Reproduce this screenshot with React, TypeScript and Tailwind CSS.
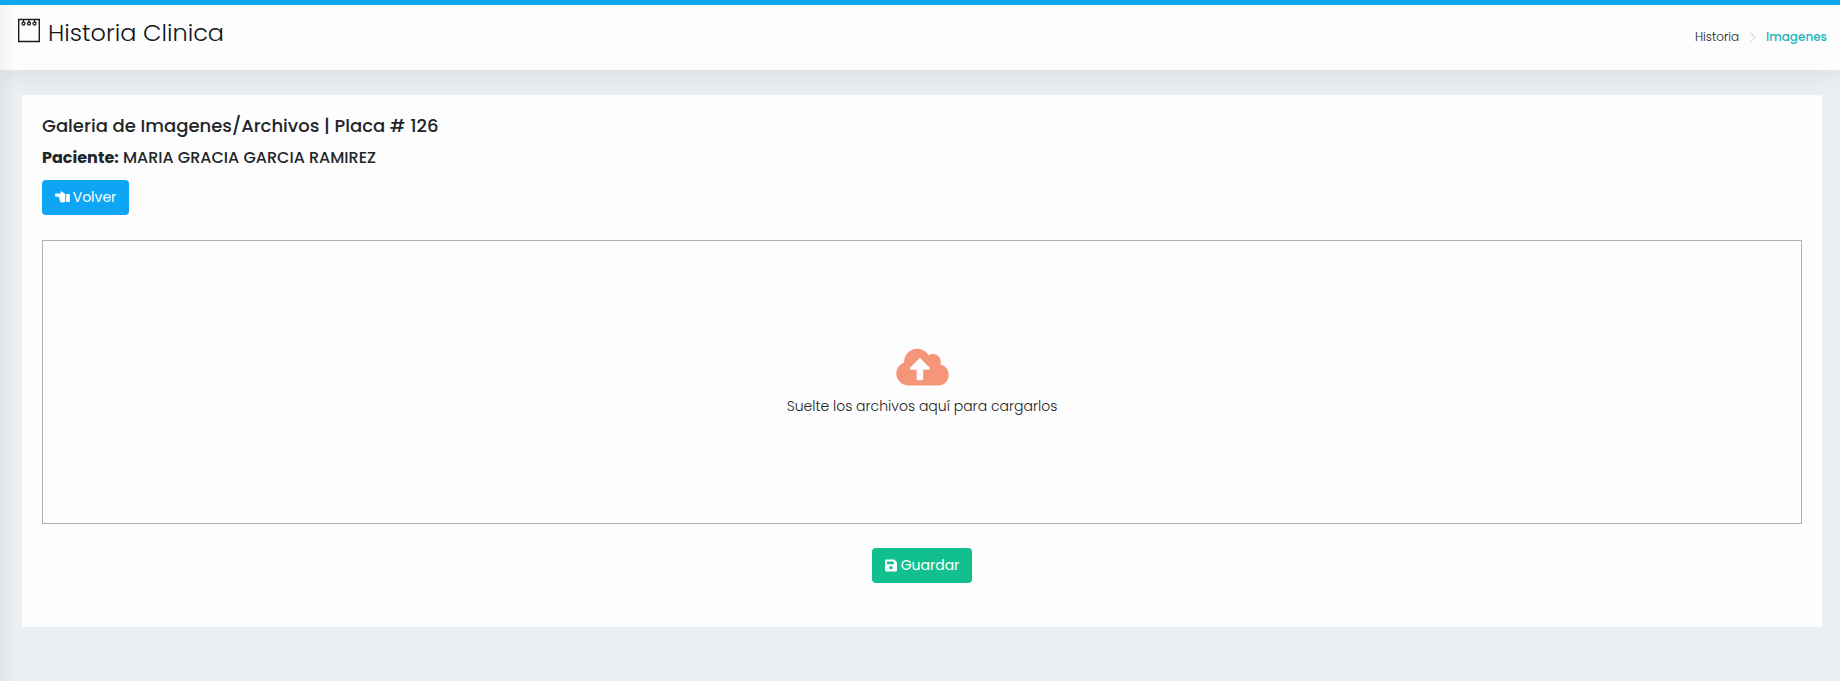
import React from 'react';
import { FaCloudUploadAlt } from 'react-icons/fa';

const NotepadIcon = () => (
  <svg className="mt-[18px] h-[25px] w-[22px] shrink-0" viewBox="0 0 22 25" fill="none" stroke="#1c1c1c">
    <path d="M.7 1.5h20.6v22H.7z" strokeWidth="1.4" />
    <path d="M5.5 1v3M11 1v3M16.5 1v3" />
    <circle cx="5.500" cy="5.500" r="1.500" strokeWidth="1.300" />
    <circle cx="11" cy="5.500" r="1.500" strokeWidth="1.300" />
    <circle cx="16.500" cy="5.500" r="1.500" strokeWidth="1.300" />
  </svg>
);

const HandIcon = () => (
  <svg className="-mt-[2px] h-[12px] w-[15px]" viewBox="0 0 15 12" fill="currentColor">
    <path d="M1 2.5h5.200L5.500 1.400C5.300.6 6.100.2 6.800.6L10.300 3v7.600c-.8.6-1.500.9-2.500.9H6.900c-1 0-1.700-.7-1.600-1.600-.8-.4-1-1.200-.7-1.900-.7-.6-.8-1.500-.3-2.200H1C.3 5.800 0 5 0 4.200S.3 2.500 1 2.500zM11.200 3h2.900c.4 0 .7.3.7.7v6.600c0 .4-.3.7-.7.7h-2.900z" />
  </svg>
);

const SaveIcon = () => (
  <svg className="-mt-px h-[13px] w-[12px]" viewBox="0 0 12 13" fill="currentColor" fillRule="evenodd">
    <path d="M1.200.5h8L12 3.300v8c0 .7-.5 1.200-1.200 1.200H1.200C.5 12.500 0 12 0 11.300V1.700C0 1 .5.500 1.200.500zM2 2.500v2.700h6.800V2.500zM6 7a1.700 1.700 0 1 0 0 3.400A1.700 1.700 0 0 0 6 7z" />
  </svg>
);

const Header = () => {
  return (
    <header className="relative flex h-[70px] justify-between border-t-5 border-[#0ea5f4] bg-[#fdfdfd] pl-[18px] pr-[13px] shadow-[0_0_28px_rgba(82,100,100,0.15)]">
      <div className="-mt-[5px] flex">
        <NotepadIcon />
        <h1 className="ml-2 mt-[15px] text-[24px] leading-[36px] font-light text-[#111518]">Historia Clinica</h1>
      </div>
      <nav className="-mt-[5px] flex h-[74px] items-center text-[12px] text-[#222]">
        <span className="font-light">Historia</span>
        <svg className="ml-[10px] mr-[10px] h-[11px] w-[7px]" viewBox="0 0 7 11" fill="none" stroke="#c5cacd">
          <path d="M1 .5l5 5-5 5" />
        </svg>
        <span className="font-medium text-[#1fb5ba]">Imagenes</span>
      </nav>
    </header>
  );
};

const Gallery = () => {
  return (
    <section className="ml-[22px] mt-[25px] flex h-[532px] w-[1800px] flex-col bg-[#fdfdfd] px-5 pt-[17px]">
      <h2 className="h-[27px] text-[18px] leading-[27px] font-medium text-[#212529]">Galeria de Imagenes/Archivos | Placa # 126</h2>
      <h3 className="mt-[7px] h-6 text-[16px] leading-6 font-medium text-[#212529]">
        <b className="font-bold">Paciente:</b> MARIA GRACIA GARCIA RAMIREZ
      </h3>
      <button className="mt-[10px] flex h-[35px] w-[87px] items-center justify-center gap-[3px] rounded-[4px] bg-[#0ea5f4] text-[14px] text-white">
        <HandIcon />
        <span>Volver</span>
      </button>
      <div className="mt-[25px] flex h-[284px] flex-col items-center border border-[#b0b0b0] pt-[105px]">
        <FaCloudUploadAlt className="h-[42px] w-[53px] text-[#f69679]" />
        <p className="mt-[6px] text-[14px] leading-6 font-light text-[#222]">Suelte los archivos aquí para cargarlos</p>
      </div>
      <button className="mx-auto mt-6 flex h-[35px] w-[100px] items-center justify-center gap-[4px] rounded-[4px] bg-[#12bf8f] text-[14px] text-white">
        <SaveIcon />
        <span>Guardar</span>
      </button>
    </section>
  );
};

const App = () => {
  return (
    <div className="relative h-[681px] w-[1840px] overflow-hidden bg-[#e9eff3] font-[Poppins,Inter,sans-serif] whitespace-nowrap">
      <Header />
      <Gallery />
      <div className="pointer-events-none absolute bottom-0 left-0 top-[5px] w-4 bg-gradient-to-r from-[#52646e]/6 to-transparent"></div>
    </div>
  );
};

export default App;
